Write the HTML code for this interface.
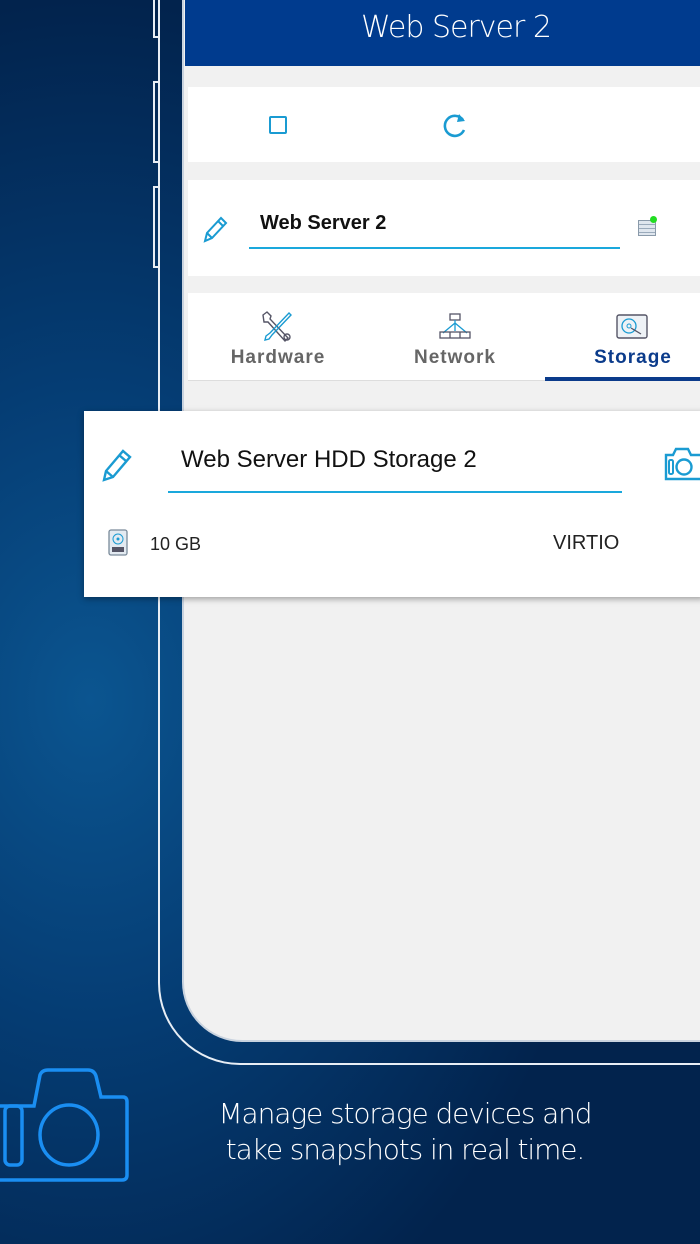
<!DOCTYPE html>
<html><head><meta charset="utf-8"><style>
*{margin:0;padding:0;box-sizing:border-box}
body{width:700px;height:1244px;overflow:hidden;position:relative;font-family:"Liberation Sans",sans-serif;
background:radial-gradient(ellipse 520px 700px at 90px 700px,#0b5590 0%,#053d74 45%,#02234d 100%);}
.abs{position:absolute}
.outer{left:158px;top:-100px;width:700px;height:1165px;border:2px solid #e8eef5;border-radius:0 0 0 82px;border-top:none}
.btn{left:153px;width:6px;border:2px solid #e8eef5;border-right:none;background:transparent}
.screen{left:182px;top:-10px;width:600px;height:1052px;background:#f1f1f1;border-left:2px solid #c9d3df;border-bottom:2px solid #c9d3df;border-radius:0 0 0 60px;overflow:hidden}
.hdr{left:185px;top:0;width:515px;height:66px;background:#003b8e;color:#fff;font-size:30px;letter-spacing:-1px;text-align:center;line-height:56px;padding-left:27px;font-family:"DejaVu Sans","Liberation Sans",sans-serif;font-weight:200}
.card{left:188px;width:512px;background:#fff}
.tab{position:absolute;top:54px;font-size:19px;font-weight:bold;letter-spacing:1px;color:#666;width:140px;text-align:center}
.fc{left:84px;top:411px;width:620px;height:186px;background:#fff;box-shadow:0 2px 6px rgba(0,0,0,.35)}
.cap{left:160px;top:1096px;width:490px;text-align:center;color:#fff;font-size:28px;letter-spacing:-1.1px;line-height:36px;font-family:"DejaVu Sans","Liberation Sans",sans-serif;font-weight:200;white-space:nowrap}
</style></head><body>
<div class="abs outer"></div>
<div class="abs btn" style="top:-4px;height:42px"></div>
<div class="abs btn" style="top:81px;height:82px"></div>
<div class="abs btn" style="top:186px;height:82px"></div>
<div class="abs screen"></div>
<div class="abs hdr">Web Server 2</div>
<div class="abs card" style="top:87px;height:75px">
 <div class="abs" style="left:81px;top:29px;width:18px;height:18px;border:2.5px solid #1a9bd2;border-radius:2px"></div>
 <svg class="abs" style="left:253px;top:24px" width="28" height="28" viewBox="0 0 28 28"><path d="M22 9A10 10 0 1 0 23 19" fill="none" stroke="#1a9bd2" stroke-width="2.6"/><path d="M18 3L24 10L16 11Z" fill="#1a9bd2"/></svg>
</div>
<div class="abs card" style="top:180px;height:96px">
 <svg class="abs" style="left:14px;top:34px" width="28" height="30" viewBox="0 0 28 30"><path d="M3 27L5 19L19 4L24 9L10 24Z M16 7L21 12 M5 19L10 24" fill="none" stroke="#1a9bd2" stroke-width="2"/></svg>
 <div class="abs" style="left:72px;top:32px;font-size:20px;color:#111;font-weight:bold">Web Server 2</div>
 <div class="abs" style="left:61px;top:67px;width:371px;height:1.5px;background:#1aa8dc"></div>
 <div class="abs" style="left:450px;top:40px;width:18px;height:16px;border:1.5px solid #8a9aaa;background:repeating-linear-gradient(#dfe6ee 0 3px,#9aaabb 3px 4px)"></div>
 <div class="abs" style="left:462px;top:36px;width:7px;height:7px;border-radius:50%;background:#22dd22"></div>
</div>
<div class="abs card" style="top:293px;height:88px;border-bottom:1px solid #ddd">
 <svg class="abs" style="left:72px;top:18px" width="34" height="32" viewBox="0 0 34 32"><path d="M3 4L7 1L11 5L10 8L28 27L25 30L8 11L4 11Z" fill="none" stroke="#556" stroke-width="1.4"/><path d="M29 2L31 4L12 24L9 28L5 29L6 25L10 22Z" fill="none" stroke="#1a9bd2" stroke-width="1.4"/><circle cx="27" cy="26" r="3" fill="none" stroke="#556" stroke-width="1.4"/></svg>
 <svg class="abs" style="left:251px;top:20px" width="32" height="28" viewBox="0 0 32 28"><rect x="11" y="1" width="10" height="6" fill="none" stroke="#556" stroke-width="1.3"/><path d="M16 7V18M16 10L4 20M16 10L28 20" stroke="#1a9bd2" stroke-width="1.3" fill="none"/><rect x="1" y="19" width="30" height="6" fill="none" stroke="#556" stroke-width="1.3"/><path d="M11 19V25M21 19V25" stroke="#556" stroke-width="1.3"/></svg>
 <svg class="abs" style="left:428px;top:21px" width="32" height="25" viewBox="0 0 32 25"><rect x="1" y="1" width="30" height="23" rx="2" fill="#eef2f6" stroke="#556" stroke-width="1.4"/><circle cx="13" cy="12" r="7" fill="none" stroke="#1a9bd2" stroke-width="1.3"/><circle cx="13" cy="12" r="2" fill="none" stroke="#1a9bd2"/><path d="M15 14L25 20" stroke="#556" stroke-width="1.3"/></svg>
 <div class="tab" style="left:20px">Hardware</div>
 <div class="tab" style="left:197px">Network</div>
 <div class="tab" style="left:375px;color:#0b3b8b">Storage</div>
 <div class="abs" style="left:357px;top:84px;width:155px;height:4px;background:#0b3b8b"></div>
</div>
<div class="abs fc">
 <svg class="abs" style="left:17px;top:36px" width="34" height="36" viewBox="0 0 34 36"><path d="M3 33L5 24L22 4L29 10L12 30Z M18 8L25 14 M5 24L12 30" fill="none" stroke="#1a9bd2" stroke-width="2.4"/></svg>
 <div class="abs" style="left:97px;top:35px;font-size:24px;color:#111">Web Server HDD Storage 2</div>
 <div class="abs" style="left:84px;top:80px;width:454px;height:1.5px;background:#1aa8dc"></div>
 <svg class="abs" style="left:580px;top:36px" width="40" height="34" viewBox="0 0 40 34"><path d="M2 8H9L12 2H24L27 8H38V32H2Z" fill="none" stroke="#1a9bd2" stroke-width="2.4"/><rect x="5" y="13" width="4" height="14" rx="1.5" fill="none" stroke="#1a9bd2" stroke-width="2"/><circle cx="20" cy="20" r="7.5" fill="none" stroke="#1a9bd2" stroke-width="2.4"/></svg>
 <svg class="abs" style="left:24px;top:118px" width="20" height="27" viewBox="0 0 20 27"><rect x="1" y="1" width="18" height="25" rx="2" fill="#e3eaf1" stroke="#7a8a9a" stroke-width="1.3"/><circle cx="10" cy="10" r="5" fill="none" stroke="#1a9bd2"/><circle cx="10" cy="10" r="1.5" fill="#1a9bd2"/><rect x="4" y="18" width="12" height="5" fill="#556"/></svg>
 <div class="abs" style="left:66px;top:123px;font-size:18px;color:#222">10 GB</div>
 <div class="abs" style="left:469px;top:121px;font-size:20px;color:#222">VIRTIO</div>
</div>
<svg class="abs" style="left:0;top:1067px" width="132" height="118" viewBox="0 0 132 118"><path d="M-10 39H34L40 8Q42 3 48 3H88Q94 3 96 9L101 30H123Q127 30 127 35V108Q127 113 122 113H-10" fill="none" stroke="#1a8ef2" stroke-width="3.5"/><rect x="5" y="39" width="17" height="59" rx="5" fill="none" stroke="#1a8ef2" stroke-width="3.5"/><ellipse cx="69" cy="68" rx="29" ry="30" fill="none" stroke="#1a8ef2" stroke-width="3.5"/></svg>
<div class="abs cap">Manage storage devices and<br>take snapshots in real time.</div>
</body></html>
